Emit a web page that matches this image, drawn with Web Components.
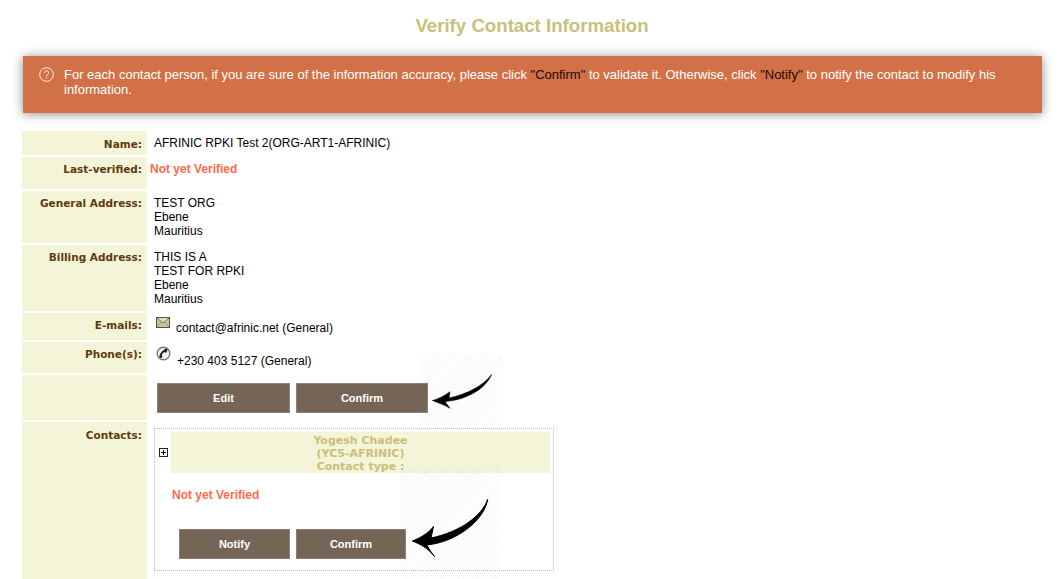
<!DOCTYPE html>
<html lang="en">
<head>
<meta charset="utf-8">
<title>Verify Contact Information</title>
<style>
  html, body { margin: 0; background: #fff; }
  body { font: 12px "Liberation Sans", Arial, sans-serif; color: #000; height: 579px; overflow: hidden; }
</style>
</head>
<body>
<verify-page>
  <page-title>Verify Contact Information</page-title>
  <info-banner>For each contact person, if you are sure of the information accuracy, please click <q-dark>"Confirm"</q-dark> to validate it. Otherwise, click <q-dark>"Notify"</q-dark> to notify the contact to modify his<br>information.</info-banner>
  <info-row label="Name:" label-pad="6" height="24" pad="5" indent="7">AFRINIC RPKI Test 2(ORG-ART1-AFRINIC)</info-row>
  <info-row label="Last-verified:" height="32" pad="5" indent="3"><not-verified>Not yet Verified</not-verified></info-row>
  <info-row label="General Address:" height="52" pad="5" indent="7">TEST ORG<br>Ebene<br>Mauritius</info-row>
  <info-row label="Billing Address:" height="66" pad="5" indent="7">THIS IS A<br>TEST FOR RPKI<br>Ebene<br>Mauritius</info-row>
  <info-row label="E-mails:" height="27" pad="6" indent="9"><icon-line kind="mail">contact@afrinic.net (General)</icon-line></info-row>
  <info-row label="Phone(s):" height="31" pad="6" indent="9"><icon-line kind="phone">+230 403 5127 (General)</icon-line></info-row>
  <info-row height="45" pad="8" indent="10" free>
    <button-row>
      <action-button width="133">Edit</action-button>
      <action-button width="132">Confirm</action-button>
      <arrow-mark style="left:265px;top:-30px" hatch="80,72" small></arrow-mark>
    </button-row>
  </info-row>
  <info-row label="Contacts:" label-pad="6" height="160" pad="6" indent="7" free>
    <contact-card name="Yogesh Chadee" handle="(YC5-AFRINIC)">
      <not-verified>Not yet Verified</not-verified>
      <button-row slot="actions">
        <action-button width="111">Notify</action-button>
        <action-button width="110">Confirm</action-button>
        <arrow-mark style="left:221px;top:-63px" hatch="100,113"></arrow-mark>
      </button-row>
    </contact-card>
  </info-row>
</verify-page>

<script>
// each element just clones its own markup into an open shadow root
class BaseElement extends HTMLElement {
  constructor() {
    super();
    this.attachShadow({ mode: "open" });
  }
  connectedCallback() {
    const template = document.createElement("template");
    template.innerHTML = this.getTemplate();
    this.shadowRoot.appendChild(template.content.cloneNode(true));
  }
}

class VerifyPage extends BaseElement {
  getTemplate() {
    return `
      <style>
        :host { display: flex; flex-direction: column; gap: 2px; padding: 0 20px 0 22px; }
      </style>
      <slot></slot>`;
  }
}

class PageTitle extends BaseElement {
  getTemplate() {
    return `
      <style>
        :host { display: block; height: 54px; padding-top: 15px; box-sizing: border-box; text-align: center;
                font: bold 18.67px/21px "Liberation Sans", Arial, sans-serif; color: #c9c07c; }
      </style>
      <slot></slot>`;
  }
}

class InfoBanner extends BaseElement {
  getTemplate() {
    return `
      <style>
        :host { display: flex; height: 57px; box-sizing: border-box; padding: 11px 37px 0 16px; margin: 0 0 16px 1px;
                background: #d27147; color: #fff; font-size: 13px; line-height: 15px; box-shadow: 0 1px 10px rgba(0,0,0,.45); }
        svg { flex: none; width: 15px; height: 15px; margin-right: 10px; }
      </style>
      <svg viewBox="0 0 15 15" fill="none" stroke="#fff">
        <circle cx="7.5" cy="7.5" r="6.8" stroke-width=".9"/>
        <path d="M5.6 5.8a2 2 0 1 1 3.1 1.7c-.8.5-1.2.9-1.2 1.8" stroke-width="1"/>
        <circle cx="7.5" cy="11" r=".6" fill="#fff" stroke="none"/>
      </svg>
      <div><slot></slot></div>`;
  }
}

class QDark extends BaseElement {
  getTemplate() {
    return `<style>:host { color: #1a0a05; }</style><slot></slot>`;
  }
}

class NotVerified extends BaseElement {
  getTemplate() {
    return `<style>:host { font: bold 12px/14px "Liberation Sans", Arial, sans-serif; color: #ff6b4a; }</style><slot></slot>`;
  }
}

class InfoRow extends BaseElement {
  getTemplate() {
    const label = this.getAttribute("label") || "";
    const labelPad = this.getAttribute("label-pad") || 5;
    const height = this.getAttribute("height");
    const pad = this.getAttribute("pad");
    const indent = this.getAttribute("indent");
    return `
      <style>
        :host { display: grid; grid-template-columns: 125px 1fr; height: ${height}px; line-height: 14px; }
        .label { background: #f4f4d9; text-align: right; padding: ${labelPad}px 5px 0 0; box-sizing: border-box;
                 font: bold 10.5px/14px "DejaVu Sans", Verdana, sans-serif; color: #5f3a0c; white-space: nowrap; }
        .value { padding: ${pad}px 0 0 ${indent}px; min-width: 0; }
      </style>
      <div class="label">${label}</div>
      <div class="value"><slot></slot></div>`;
  }
}

class IconLine extends BaseElement {
  getTemplate() {
    const mail = `
      <svg width="14" height="11" viewBox="0 0 14 11" style="margin:-2px 6px 0 0">
        <rect x=".5" y=".5" width="13" height="10" fill="#c9c79a" stroke="#55553f"/>
        <path d="M1 1l6 5 6-5" fill="#e2e0bd" stroke="#77775a"/>
        <path d="M1 10l4.500-5M13 10L8.500 5" fill="none" stroke="#9a9a78"/>
      </svg>`;
    const phone = `
      <svg width="15" height="15" viewBox="0 0 15 15" style="margin:-2px 6px 0 0">
        <circle cx="7.500" cy="7.500" r="6.300" fill="#f4f4f4" stroke="#777" stroke-width="1.400"/>
        <path d="M11.200 2.500C8 2.800 3.500 6.500 3.300 11.200c1 1.200 2.700 1 3.200-.4L5.800 9.200c.5-1.500 1.400-2.500 2.800-3.200l1.100.9c1.200-.3 2-2.800 1.500-4.400z" fill="#222"/>
      </svg>`;
    const isMail = this.getAttribute("kind") === "mail";
    return `
      <style>
        :host { display: flex; align-items: flex-start; }
        svg { flex: none; }
        span { display: block; padding-top: ${isMail ? 2 : 6}px; }
      </style>
      ${isMail ? mail : phone}<span><slot></slot></span>`;
  }
}

class ButtonRow extends BaseElement {
  getTemplate() {
    return `
      <style>
        :host { display: flex; gap: 6px; position: relative; }
      </style>
      <slot></slot>`;
  }
}

class ActionButton extends BaseElement {
  getTemplate() {
    return `
      <style>
        :host { display: flex; align-items: center; justify-content: center; box-sizing: border-box;
                width: ${this.getAttribute("width")}px; height: 30px; background: #756556; border: 1px solid #8b8179;
                color: #fff; font: bold 11px "Liberation Sans", Arial, sans-serif; position: relative; z-index: 1; }
      </style>
      <slot></slot>`;
  }
}

class ArrowMark extends BaseElement {
  getTemplate() {
    const [w, h] = this.getAttribute("hatch").split(",");
    const arrow = this.hasAttribute("small")
      ? `<path d="M69.700 21.300C62 32 46 41 27 45L28 38.700C22 43 16 46 10.300 47.500C16 50 23 52 28 55.300C25.500 52 24 50 23.500 48.500C44 47 64 36 69.700 21.300Z" fill="#000" stroke="#000" stroke-width=".5"/>`
      : `<path d="M87.700 33.300C82 50 60 66 31 72L33.500 60.500C29 67 20 72 12.300 75C20 78 28 82 34.500 90.500C30 85 28 81 27 79C56 76 84 55 87.700 33.300Z" fill="#000" stroke="#000" stroke-width="1"/>`;
    return `
      <style>
        :host { display: block; position: absolute; width: ${w}px; height: ${h}px;
                background: repeating-linear-gradient(135deg, rgba(0,0,0,.03) 0 1px, transparent 1px 3px); }
        svg { position: absolute; inset: 0; }
      </style>
      <svg width="${w}" height="${h}">${arrow}</svg>`;
  }
}

class ContactCard extends BaseElement {
  getTemplate() {
    return `
      <style>
        :host { display: block; width: 400px; height: 143px; box-sizing: border-box; border: 1px dotted #bbb; padding: 3px;
                position: relative; }
        .head { display: flex; align-items: center; }
        .toggle { flex: none; width: 7px; height: 7px; border: 1px solid #222; margin: 0 3px 0 1px; position: relative; }
        .toggle::before { content: ""; position: absolute; left: 1px; right: 1px; top: 3px; height: 1px; background: #000; }
        .toggle::after { content: ""; position: absolute; top: 1px; bottom: 1px; left: 3px; width: 1px; background: #000; }
        .title { flex: 1; height: 41px; background: #f4f4d9; text-align: center;
                 font: bold 11px/13px "DejaVu Sans", Verdana, sans-serif; color: #c9c07c; padding-top: 2px; box-sizing: border-box; }
        .status { padding: 15px 0 0 14px; height: 42px; box-sizing: border-box; }
        .actions { margin: 14px 0 0 21px; position: relative; z-index: 2; }
      </style>
      <div class="head">
        <span class="toggle"></span>
        <div class="title">${this.getAttribute("name")}<br>${this.getAttribute("handle")}<br>Contact type :</div>
      </div>
      <div class="status"><slot></slot></div>
      <div class="actions"><slot name="actions"></slot></div>`;
  }
}

customElements.define("verify-page", VerifyPage);
customElements.define("page-title", PageTitle);
customElements.define("info-banner", InfoBanner);
customElements.define("q-dark", QDark);
customElements.define("not-verified", NotVerified);
customElements.define("info-row", InfoRow);
customElements.define("icon-line", IconLine);
customElements.define("button-row", ButtonRow);
customElements.define("action-button", ActionButton);
customElements.define("arrow-mark", ArrowMark);
customElements.define("contact-card", ContactCard);
</script>
</body>
</html>
